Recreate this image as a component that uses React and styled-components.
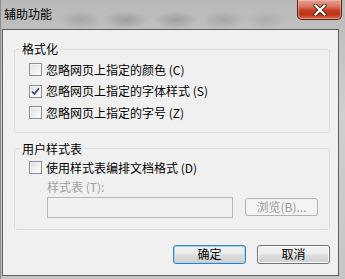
import React from "react";
import styled, { createGlobalStyle } from "styled-components";

const GlobalStyle = createGlobalStyle`
  html, body {
    margin: 0;
    padding: 0;
    background: #ffffff;
  }
  body {
    font-family: "Noto Sans CJK SC", "Liberation Sans", sans-serif;
    font-size: 12px;
    color: #000;
  }
`;

const Window = styled.div`
  width: 345px;
  height: 279px;
  box-sizing: border-box;
  display: flex;
  flex-direction: column;
  padding: 0 6px 3px 1px;
  border-left: 1px solid #8c8c8c;
  background:
    radial-gradient(ellipse 22px 9px at 80px 20px, rgba(120, 120, 120, 0.35), transparent),
    radial-gradient(ellipse 22px 9px at 125px 20px, rgba(110, 110, 110, 0.4), transparent),
    radial-gradient(ellipse 22px 9px at 175px 20px, rgba(110, 110, 110, 0.4), transparent),
    radial-gradient(ellipse 22px 9px at 222px 20px, rgba(120, 120, 120, 0.35), transparent),
    radial-gradient(ellipse 20px 9px at 265px 20px, rgba(130, 130, 130, 0.3), transparent),
    linear-gradient(180deg, #b9b9b9 0%, #cfcfcf 40%, #c6c6c6 100%);
`;

const TitleBar = styled.div`
  height: 29px;
  flex: none;
  display: flex;
  justify-content: space-between;
  align-items: flex-start;
  padding-left: 2px;
`;

const Title = styled.div`
  padding-top: 7px;
  line-height: 14px;
  font-size: 12px;
  color: #000;
`;

const CloseButton = styled.div`
  width: 45px;
  height: 20px;
  box-sizing: border-box;
  margin-right: -3px;
  display: flex;
  align-items: center;
  justify-content: center;
  border: 1px solid #5a2018;
  border-top: none;
  border-radius: 0 0 5px 5px;
  background: linear-gradient(
    180deg,
    #e5a294 0%,
    #d9755f 35%,
    #c23f25 55%,
    #b9361c 75%,
    #d7664b 100%
  );
  box-shadow: inset 0 0 0 1px rgba(255, 200, 190, 0.5);
`;

const Client = styled.div`
  flex: 1;
  display: flex;
  flex-direction: column;
  border: 1px solid #5f5f5f;
  background: #f0f0f0;
  padding: 12px 8px 0 11px;
`;

const Group = styled.fieldset`
  margin: ${(p) => p.$top || 0}px 0 0 0;
  padding: ${(p) => p.$padTop}px 8px ${(p) => p.$padBottom}px 14px;
  border: 1px solid #d5dfe5;
  border-radius: 3px;
  min-width: 0;
`;

const Legend = styled.legend`
  padding: 0 2px;
  margin-left: -9px;
  line-height: 14px;
  font-size: 12px;
  color: #000;
`;

const Row = styled.div`
  height: ${(p) => p.$h}px;
  display: flex;
  align-items: center;
  gap: 4px;
  line-height: 14px;
`;

const Box = styled.span`
  width: 13px;
  height: 13px;
  box-sizing: border-box;
  flex: none;
  display: flex;
  align-items: center;
  justify-content: center;
  border: 1px solid #8e8f8f;
  background: linear-gradient(135deg, #dcdcdc 0%, #f0f0f0 55%, #ffffff 100%);
  box-shadow: inset 0 0 0 1px #f4f4f4;
`;

const SubLabel = styled.div`
  margin-left: 18px;
  line-height: 14px;
  padding-top: 1px;
  color: #a0a0a0;
`;

const FieldRow = styled.div`
  margin: 3px 0 0 18px;
  display: flex;
  align-items: center;
  gap: 12px;
`;

const Field = styled.div`
  width: 186px;
  height: 21px;
  box-sizing: border-box;
  border: 1px solid #b8b8b8;
  background: #f0f0f0;
`;

const Buttons = styled.div`
  margin-top: 15px;
  display: flex;
  justify-content: flex-end;
  gap: 11px;
`;

const Button = styled.div`
  width: 73px;
  height: ${(p) => (p.$small ? 18 : 19)}px;
  box-sizing: border-box;
  display: flex;
  align-items: center;
  justify-content: center;
  line-height: 14px;
  font-size: 12px;
  border-radius: 3px;
  border: 1px solid ${(p) => (p.$disabled ? "#adb2b5" : p.$default ? "#3c7fb1" : "#707070")};
  color: ${(p) => (p.$disabled ? "#9a9a9a" : "#000")};
  background: ${(p) =>
    p.$disabled
      ? "#f4f4f4"
      : "linear-gradient(180deg, #f2f2f2 0%, #ebebeb 48%, #dddddd 52%, #cfcfcf 100%)"};
  box-shadow: inset 0 0 0 1px
    ${(p) => (p.$disabled ? "#f4f4f4" : p.$default ? "#9fd7f5" : "#fcfcfc")};
`;

const Check = ({ checked }) => (
  <Box>
    {checked && (
      <svg width="9" height="9" viewBox="0 0 9 9">
        <path d="M1 4.5 L3.4 7 L8 1.2" fill="none" stroke="#34427a" strokeWidth="1.6" />
      </svg>
    )}
  </Box>
);

const CloseIcon = () => (
  <svg width="14" height="12" viewBox="0 0 14 12">
    <path d="M2.5 1.5 L11.5 10.5 M11.5 1.5 L2.5 10.5" stroke="#4a1a12" strokeWidth="4.2" strokeLinecap="round" />
    <path d="M2.5 1.5 L11.5 10.5 M11.5 1.5 L2.5 10.5" stroke="#ffffff" strokeWidth="2.4" strokeLinecap="round" />
  </svg>
);

export default function App() {
  return (
    <>
      <GlobalStyle />
      <Window>
        <TitleBar>
          <Title>辅助功能</Title>
          <CloseButton>
            <CloseIcon />
          </CloseButton>
        </TitleBar>
        <Client>
          <Group $padTop={3} $padBottom={8}>
            <Legend>格式化</Legend>
            <Row $h={21.5}>
              <Check />
              忽略网页上指定的颜色 (C)
            </Row>
            <Row $h={21.5}>
              <Check checked />
              忽略网页上指定的字体样式 (S)
            </Row>
            <Row $h={21.5}>
              <Check />
              忽略网页上指定的字号 (Z)
            </Row>
          </Group>
          <Group $top={9} $padTop={1} $padBottom={11}>
            <Legend>用户样式表</Legend>
            <Row $h={22}>
              <Check />
              使用样式表编排文档格式 (D)
            </Row>
            <SubLabel>样式表 (T):</SubLabel>
            <FieldRow>
              <Field />
              <Button $disabled $small>
                浏览(B)...
              </Button>
            </FieldRow>
          </Group>
          <Buttons>
            <Button $default>确定</Button>
            <Button>取消</Button>
          </Buttons>
        </Client>
      </Window>
    </>
  );
}
